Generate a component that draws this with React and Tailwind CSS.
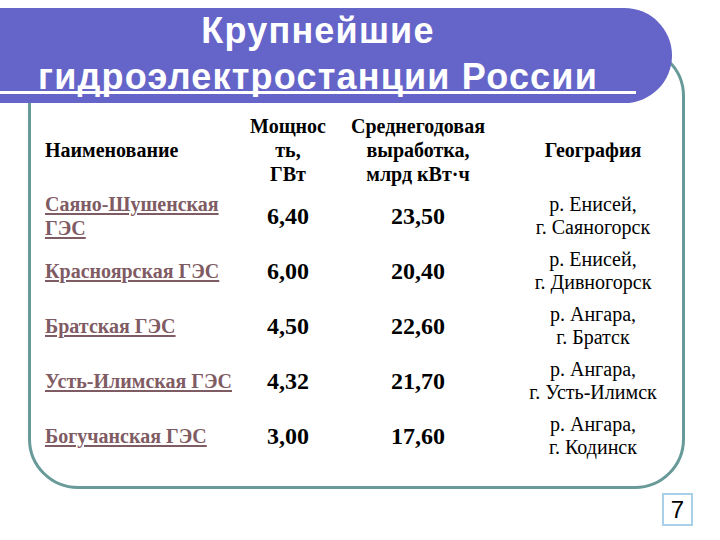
const rows = [
  { name: "Саяно-Шушенская ГЭС", power: "6,40", output: "23,50", river: "р. Енисей,", city: "г. Саяногорск" },
  { name: "Красноярская ГЭС", power: "6,00", output: "20,40", river: "р. Енисей,", city: "г. Дивногорск" },
  { name: "Братская ГЭС", power: "4,50", output: "22,60", river: "р. Ангара,", city: "г. Братск" },
  { name: "Усть-Илимская ГЭС", power: "4,32", output: "21,70", river: "р. Ангара,", city: "г. Усть-Илимск" },
  { name: "Богучанская ГЭС", power: "3,00", output: "17,60", river: "р. Ангара,", city: "г. Кодинск" },
];

export default function App() {
  return (
    <div className="w-[720px] h-[540px] bg-white overflow-hidden">
      {/* Title banner */}
      <div className="relative z-10 mt-[12px] h-[95px] w-[672px] rounded-r-[48px] bg-[#6565c9] text-white font-bold font-['Liberation_Sans',Arial,sans-serif]">
        <div className="w-[636px] -mt-[4px] text-center text-[36px] leading-[46px] tracking-[1.2px]">
          <div>Крупнейшие</div>
          <div>гидроэлектростанции России</div>
        </div>
        <div className="w-[636px] h-[3px] -mt-[9px] bg-white" />
      </div>

      {/* Frame with table */}
      <div className="-mt-[57px] ml-[28px] w-[657px] h-[443px] border-[3px] border-[#679a98] rounded-[50px] bg-white pt-[63px] pl-[14px] font-['Liberation_Serif','Times_New_Roman',serif]">
        <div className="grid grid-cols-[205px_76px_184px_166px] h-[76px] items-center text-[20px] leading-[24px] font-bold text-black">
          <div>Наименование</div>
          <div className="text-center">Мощнос<br />ть,<br />ГВт</div>
          <div className="text-center">Среднегодовая<br />выработка,<br />млрд кВт·ч</div>
          <div className="text-center">География</div>
        </div>
        {rows.map((r) => (
          <div key={r.name} className="grid grid-cols-[205px_76px_184px_166px] h-[55px] items-center">
            <div className="text-[20px] leading-[24px] font-bold text-[#7f5b63] underline underline-offset-2">{r.name}</div>
            <div className="text-center text-[24px] font-bold text-black">{r.power}</div>
            <div className="text-center text-[24px] font-bold text-black">{r.output}</div>
            <div className="text-center text-[20px] leading-[23px] text-black">
              <div>{r.river}</div>
              <div>{r.city}</div>
            </div>
          </div>
        ))}
      </div>

      {/* Slide number */}
      <div className="mt-[4px] ml-[662px] w-[31px] h-[33px] border-2 border-[#a8d0e8] flex items-center justify-center text-[24px] text-black font-['Liberation_Sans',Arial,sans-serif]">
        7
      </div>
    </div>
  );
}
